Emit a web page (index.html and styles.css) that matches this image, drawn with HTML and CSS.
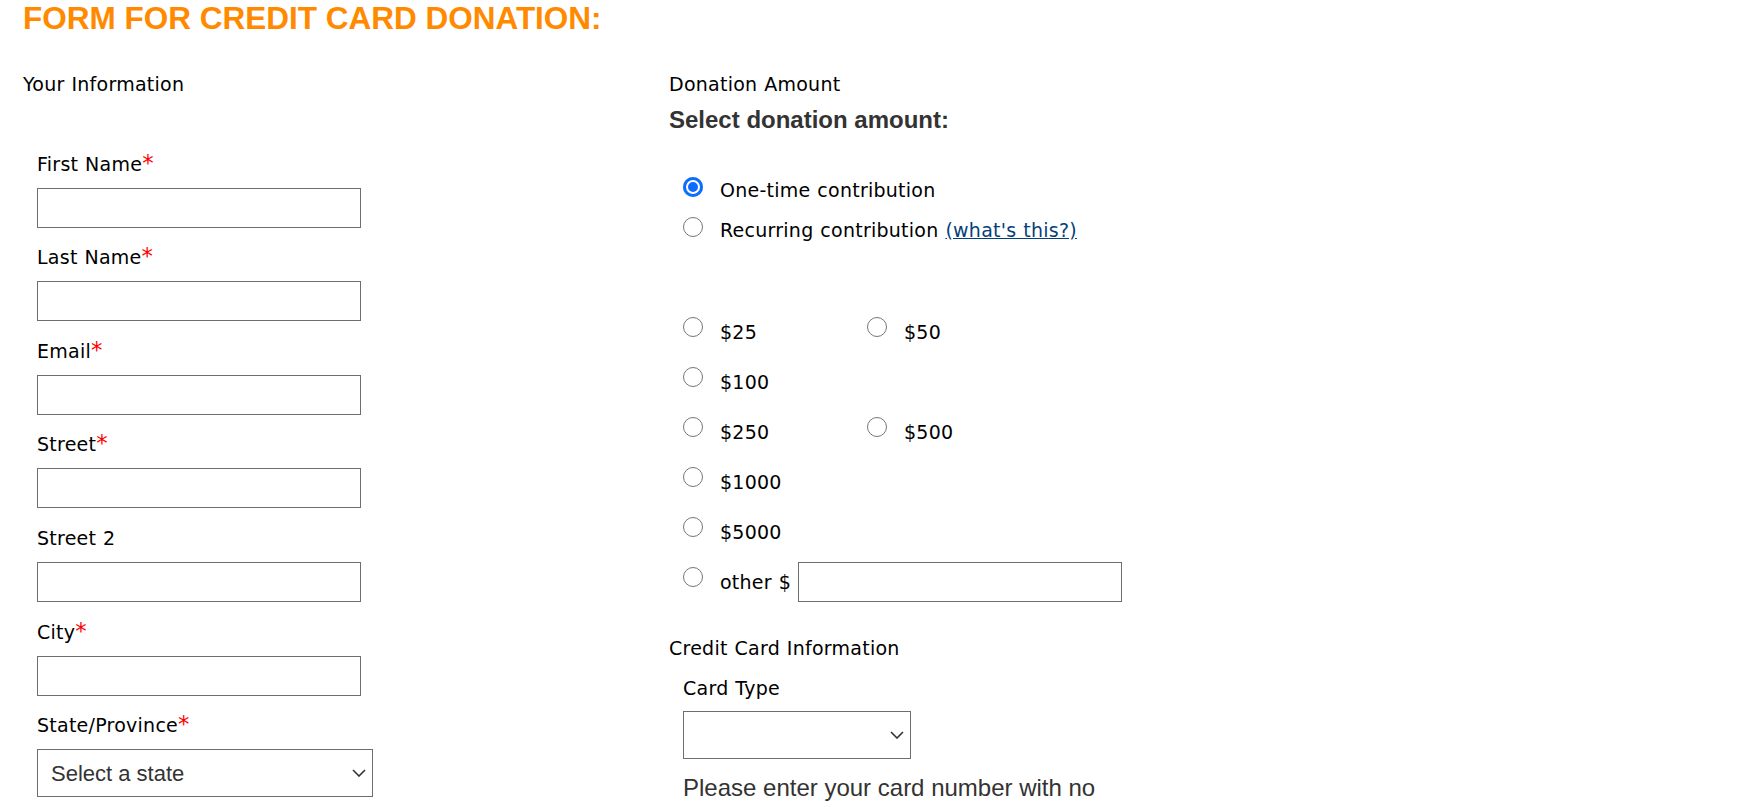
FILE: index.html
```html
<!DOCTYPE html>
<html lang="en">
<head>
<meta charset="utf-8">
<title>Form for Credit Card Donation</title>
<link rel="stylesheet" href="styles.css">
</head>
<body>
<div class="page">
  <h1 class="title">FORM FOR CREDIT CARD DONATION:</h1>
  <div class="cols">
    <section class="col">
      <div class="section-title">Your Information</div>
      <div class="fields">
        <div class="field"><label>First Name<span class="req">*</span></label><input class="text-input" type="text"></div>
        <div class="field"><label>Last Name<span class="req">*</span></label><input class="text-input" type="text"></div>
        <div class="field"><label>Email<span class="req">*</span></label><input class="text-input" type="text"></div>
        <div class="field"><label>Street<span class="req">*</span></label><input class="text-input" type="text"></div>
        <div class="field"><label>Street 2</label><input class="text-input" type="text"></div>
        <div class="field"><label>City<span class="req">*</span></label><input class="text-input" type="text"></div>
        <div class="field"><label>State/Province<span class="req">*</span></label>
          <span class="select-wrap state-select">
            <select class="select"><option>Select a state</option></select>
            <svg class="chev" width="14" height="8" viewBox="0 0 14 8"><polyline points="1,1 7,7 13,1" fill="none" stroke="#333" stroke-width="1.6"/></svg>
          </span>
        </div>
      </div>
    </section>
    <section class="col">
      <div class="section-title">Donation Amount</div>
      <div class="subhead">Select donation amount:</div>
      <div class="freq">
        <div class="freq-row"><input class="radio" type="radio" name="freq" checked><span class="opt-label">One-time contribution</span></div>
        <div class="freq-row"><input class="radio" type="radio" name="freq"><span class="opt-label">Recurring contribution <a class="link" href="#">(what's this?)</a></span></div>
      </div>
      <div class="amounts">
        <div class="amount-row">
          <div class="opt"><input class="radio" type="radio" name="amt"><span class="opt-label">$25</span></div>
          <div class="opt"><input class="radio" type="radio" name="amt"><span class="opt-label">$50</span></div>
        </div>
        <div class="amount-row">
          <div class="opt"><input class="radio" type="radio" name="amt"><span class="opt-label">$100</span></div>
        </div>
        <div class="amount-row">
          <div class="opt"><input class="radio" type="radio" name="amt"><span class="opt-label">$250</span></div>
          <div class="opt"><input class="radio" type="radio" name="amt"><span class="opt-label">$500</span></div>
        </div>
        <div class="amount-row">
          <div class="opt"><input class="radio" type="radio" name="amt"><span class="opt-label">$1000</span></div>
        </div>
        <div class="amount-row">
          <div class="opt"><input class="radio" type="radio" name="amt"><span class="opt-label">$5000</span></div>
        </div>
        <div class="amount-row">
          <div class="opt opt-other"><input class="radio" type="radio" name="amt"><span class="opt-label">other $</span><input class="text-input other-input" type="text"></div>
        </div>
      </div>
      <div class="section-title cc-title">Credit Card Information</div>
      <div class="cc-fields">
        <label class="cc-label">Card Type</label>
        <span class="select-wrap card-select">
          <select class="select"><option></option></select>
          <svg class="chev" width="14" height="8" viewBox="0 0 14 8"><polyline points="1,1 7,7 13,1" fill="none" stroke="#333" stroke-width="1.6"/></svg>
        </span>
        <div class="note">Please enter your card number with no</div>
      </div>
    </section>
  </div>
</div>
</body>
</html>
```

FILE: styles.css
```css
* {
  box-sizing: border-box;
}

html, body {
  margin: 0;
  padding: 0;
  background: #ffffff;
}

body {
  font-family: "DejaVu Sans", Verdana, sans-serif;
  font-size: 19px;
  line-height: 23px;
  letter-spacing: 0.25px;
  word-spacing: 0.6px;
  color: #000000;
  overflow: hidden;
}

.page {
  padding: 1px 0 0 23px;
}

.title {
  margin: 0;
  font-family: "Liberation Sans", Arial, sans-serif;
  font-weight: 700;
  font-size: 31.5px;
  line-height: 35px;
  letter-spacing: 0;
  word-spacing: 0;
  color: #ff8a00;
}

.cols {
  display: grid;
  grid-template-columns: 646px 1fr;
  margin-top: 36.6px;
}

.section-title {
  line-height: 23px;
}

.fields {
  margin-top: 57px;
  padding-left: 14px;
  display: flex;
  flex-direction: column;
  gap: 18.6px;
}

.field label {
  display: block;
  line-height: 23px;
}

.req {
  color: #ff0000;
  font-size: 1.2em;
  line-height: 0;
}

.text-input {
  display: block;
  width: 324px;
  height: 40px;
  margin: 0;
  padding: 0 6px;
  border: 1px solid #6e6e6e;
  border-radius: 0;
  background: #ffffff;
  font-family: "DejaVu Sans", Verdana, sans-serif;
  font-size: 19px;
}

.field .text-input {
  margin-top: 12px;
}

.select-wrap {
  position: relative;
  display: block;
}

.state-select {
  margin-top: 12px;
  width: 336px;
  height: 48px;
}

.card-select {
  margin-top: 11px;
  width: 228px;
  height: 48px;
}

.select {
  -webkit-appearance: none;
  appearance: none;
  display: block;
  width: 100%;
  height: 100%;
  margin: 0;
  padding: 0 30px 0 13px;
  border: 1px solid #6e6e6e;
  border-radius: 0;
  background: #ffffff;
  font-family: "Liberation Sans", Arial, sans-serif;
  font-size: 22px;
  letter-spacing: 0;
  color: #333333;
}

.chev {
  position: absolute;
  right: 7px;
  top: 20px;
}

.subhead {
  margin-top: 10.4px;
  font-family: "Liberation Sans", Arial, sans-serif;
  font-weight: 700;
  font-size: 24px;
  line-height: 28px;
  letter-spacing: 0;
  word-spacing: 0;
  color: #333333;
}

.freq {
  margin-top: 36px;
  padding-left: 14px;
}

.freq-row {
  display: flex;
  align-items: flex-start;
  height: 40px;
}

.freq-row .opt-label {
  line-height: 40px;
}

.freq-row .radio {
  margin-top: 7px;
}

.radio {
  -webkit-appearance: none;
  appearance: none;
  flex: none;
  width: 20px;
  height: 20px;
  margin: 0 17px 0 0;
  border: 1.5px solid #767676;
  border-radius: 50%;
  background: #ffffff;
}

.radio:checked {
  border: none;
  background: #0b6cff;
  box-shadow: inset 0 0 0 3px #0b6cff, inset 0 0 0 5px #ffffff;
}

.opt-label {
  white-space: nowrap;
}

.link {
  color: #063f78;
  text-decoration: underline;
}

.amounts {
  margin-top: 56.6px;
  padding-left: 14px;
}

.amount-row {
  display: flex;
  height: 50px;
}

.opt {
  display: flex;
  align-items: flex-start;
  width: 184px;
}

.opt .radio {
  margin-top: 10px;
}

.opt .opt-label {
  line-height: 50px;
}

.opt-other {
  width: auto;
}

.other-input {
  align-self: center;
  margin-left: 7px;
}

.cc-title {
  margin-top: 30px;
}

.cc-fields {
  margin-top: 17px;
  padding-left: 14px;
}

.cc-label {
  display: block;
  line-height: 23px;
}

.note {
  margin-top: 15.5px;
  font-family: "Liberation Sans", Arial, sans-serif;
  font-size: 24px;
  line-height: 28px;
  letter-spacing: 0;
  word-spacing: 0;
  color: #333333;
}
```
